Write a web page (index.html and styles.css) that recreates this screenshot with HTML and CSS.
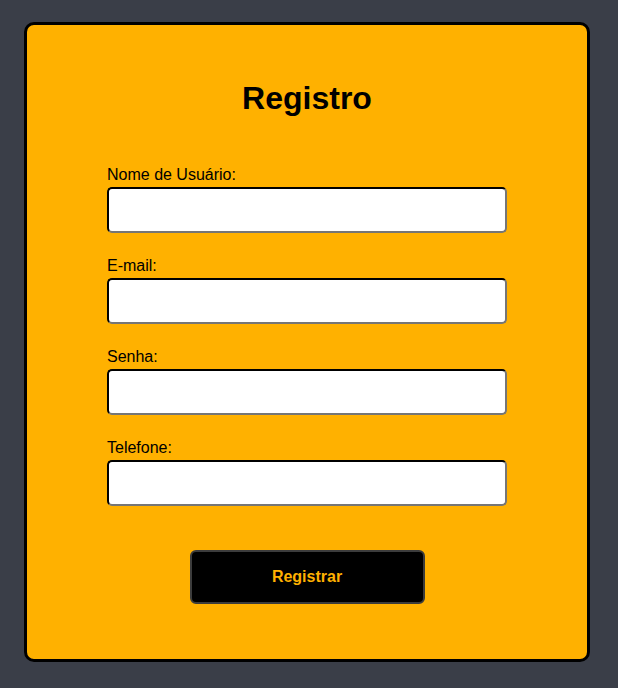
FILE: index.html
```html
<!DOCTYPE html>
<html lang="pt">
<head>
<meta charset="utf-8">
<title>Registro</title>
<link rel="stylesheet" href="styles.css">
</head>
<body>
<div class="card">
  <h1 class="title">Registro</h1>
  <form class="form">
    <div class="field">
      <label class="label" for="u">Nome de Usuário:</label>
      <input class="input" id="u" type="text">
    </div>
    <div class="field">
      <label class="label" for="e">E-mail:</label>
      <input class="input" id="e" type="email">
    </div>
    <div class="field">
      <label class="label" for="s">Senha:</label>
      <input class="input" id="s" type="password">
    </div>
    <div class="field">
      <label class="label" for="t">Telefone:</label>
      <input class="input" id="t" type="tel">
    </div>
    <div class="actions">
      <button class="button" type="button">Registrar</button>
    </div>
  </form>
</div>
</body>
</html>
```
FILE: styles.css
```css
html, body {
  margin: 0;
  padding: 0;
}
body {
  background: #3a3e48;
  font-family: "Liberation Sans", Arial, sans-serif;
  width: 618px;
  height: 688px;
  padding: 22px 0 0 24px;
  box-sizing: border-box;
}
.card {
  width: 560px;
  height: 634px;
  background: #ffb100;
  border: 3px solid #000;
  border-radius: 10px;
  box-sizing: content-box;
  display: flex;
  flex-direction: column;
  align-items: center;
}
.title {
  margin: 55px 0 0;
  font-size: 32px;
  font-weight: bold;
  line-height: 37px;
  color: #000;
}
.form {
  width: 400px;
  margin-top: 49px;
  display: flex;
  flex-direction: column;
  gap: 24px;
}
.field {
  display: flex;
  flex-direction: column;
  gap: 3px;
}
.label {
  font-size: 16px;
  line-height: 18px;
  color: #000;
}
.input {
  width: 400px;
  height: 46px;
  box-sizing: border-box;
  margin: 0;
  background: #fff;
  border: 2px inset #767676;
  border-top-color: #222;
  border-left-color: #222;
  border-right-color: #767676;
  border-bottom-color: #767676;
  border-radius: 5px;
  font-size: 16px;
}
.actions {
  display: flex;
  justify-content: center;
  margin-top: 20px;
}
.button {
  width: 235px;
  height: 54px;
  background: #000;
  color: #ffb100;
  font-family: "Liberation Sans", Arial, sans-serif;
  font-size: 16px;
  font-weight: bold;
  border: 2px solid #3c3c3c;
  border-radius: 6px;
  margin: 0;
  padding: 0;
}
```
